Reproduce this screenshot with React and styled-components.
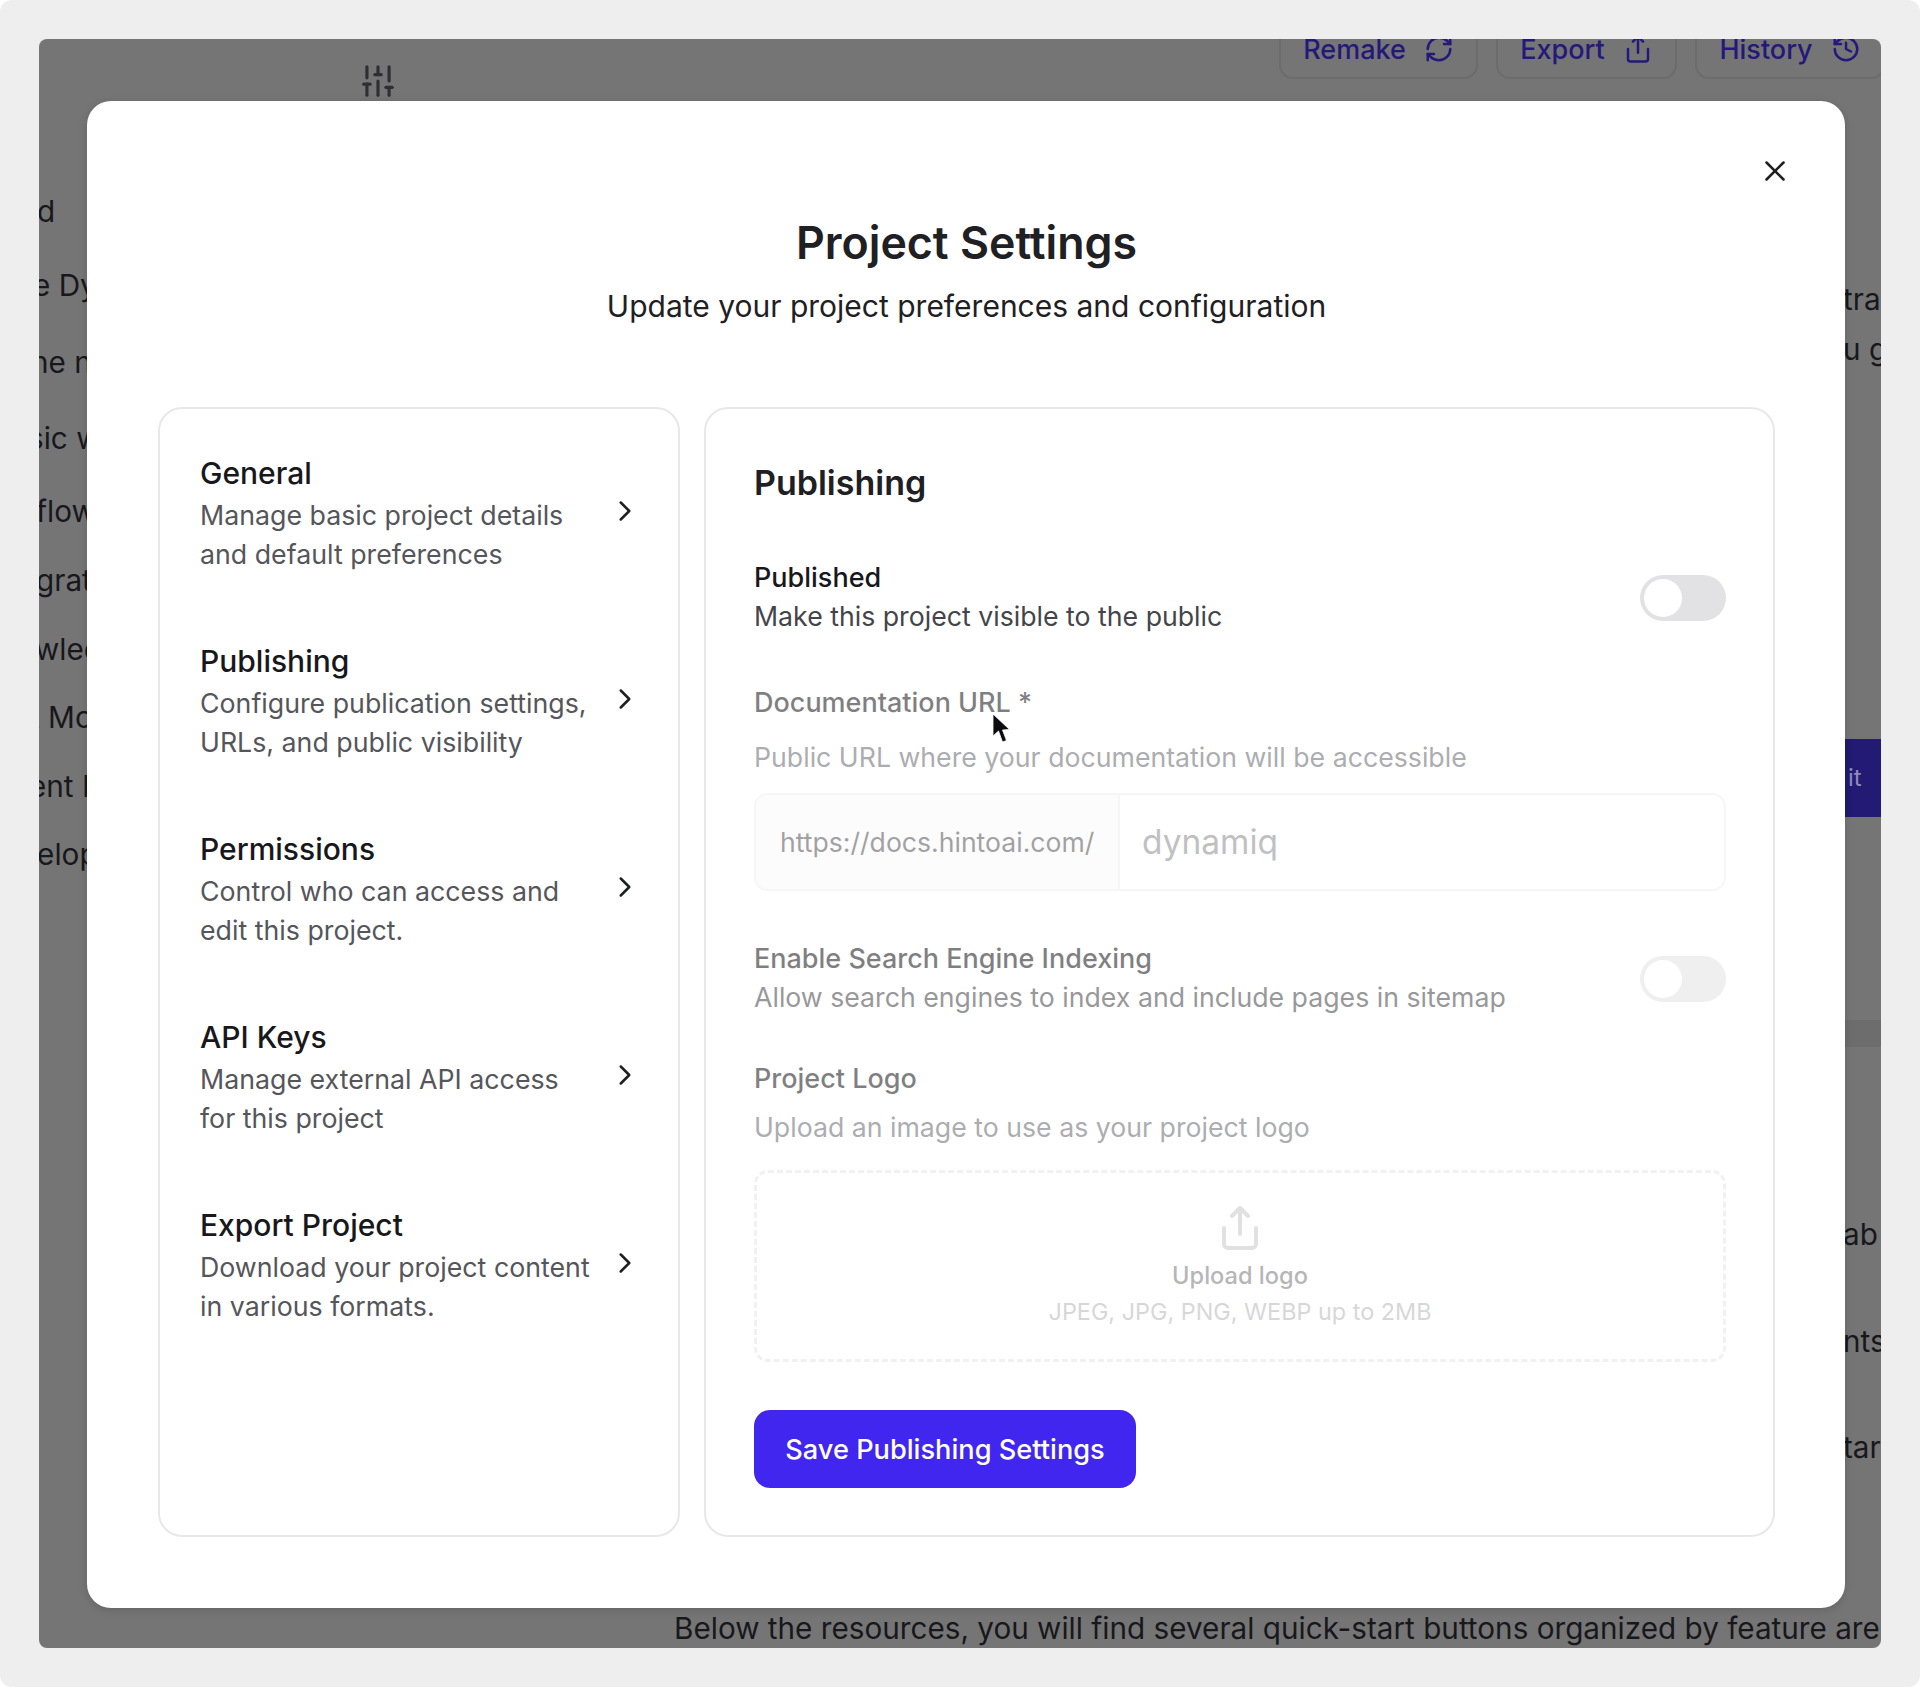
import styled, { createGlobalStyle } from "styled-components";
import { ChevronRight, History, RefreshCw, Share, SlidersVertical, X } from "lucide-react";

const navItems = [
  { title: "General", lines: ["Manage basic project details", "and default preferences"] },
  { title: "Publishing", lines: ["Configure publication settings,", "URLs, and public visibility"] },
  { title: "Permissions", lines: ["Control who can access and", "edit this project."] },
  { title: "API Keys", lines: ["Manage external API access", "for this project"] },
  { title: "Export Project", lines: ["Download your project content", "in various formats."] },
];

// the page behind the dialog, only the ends of its lines show
const backLeft = [
  { text: "d", shift: -2, pitch: 74 },
  { text: "e Dy", shift: -6, pitch: 77 },
  { text: "he n", shift: -8, pitch: 76 },
  { text: "sic w", shift: -11, pitch: 73 },
  { text: "flow", shift: -3, pitch: 69 },
  { text: "grat", shift: -3, pitch: 69 },
  { text: "wled", shift: -4, pitch: 68 },
  { text: "t Mo", shift: -9, pitch: 69 },
  { text: "ent P", shift: -10, pitch: 68 },
  { text: "velop", shift: -18, pitch: 68 },
];

export default function App() {
  return (
    <Page>
      <GlobalStyle />
      <Screen>
        <TopBar>
          <FilterSlot>
            <SlidersVertical size={38} strokeWidth={2} />
          </FilterSlot>
          <TopButton $width={199}>
            Remake <RefreshCw size={30} strokeWidth={2} />
          </TopButton>
          <TopButton $width={181}>
            Export <Share size={30} strokeWidth={2} />
          </TopButton>
          <TopButton $width={190}>
            History <History size={30} strokeWidth={2} />
          </TopButton>
        </TopBar>

        <BackLeft>
          {backLeft.map((line) => (
            <BackLeftLine key={line.text} $shift={line.shift} $pitch={line.pitch}>
              {line.text}
            </BackLeftLine>
          ))}
        </BackLeft>

        <BackRight>
          <BackBlock $height={86}>
            <BackLine>tra</BackLine>
            <BackLine>u g</BackLine>
          </BackBlock>
          <BackAction>it</BackAction>
          <BackBand />
          <BackBlock $height={249}>
            <BackLine>ab</BackLine>
            <BackLine>nts</BackLine>
            <BackLine>tar</BackLine>
          </BackBlock>
        </BackRight>

        <BackBottom>Below the resources, you will find several quick-start buttons organized by feature are</BackBottom>

        <Modal>
          <CloseButton>
            <X size={34} strokeWidth={1.8} />
          </CloseButton>
          <Title>Project Settings</Title>
          <Subtitle>Update your project preferences and configuration</Subtitle>

          <Columns>
            <NavCard>
              {navItems.map((item) => (
                <NavItem key={item.title}>
                  <div>
                    <NavTitle>{item.title}</NavTitle>
                    {item.lines.map((line) => (
                      <NavText key={line}>{line}</NavText>
                    ))}
                  </div>
                  <NavChevron size={34} strokeWidth={1.8} />
                </NavItem>
              ))}
            </NavCard>

            <MainCard>
              <SectionTitle>Publishing</SectionTitle>

              <ToggleRow>
                <div>
                  <Label>Published</Label>
                  <Help>Make this project visible to the public</Help>
                </div>
                <Toggle />
              </ToggleRow>

              <Faded>
                <Label>Documentation URL *</Label>
                <FieldHelp>Public URL where your documentation will be accessible</FieldHelp>
                <UrlField>
                  <UrlPrefix>https://docs.hintoai.com/</UrlPrefix>
                  <UrlValue>dynamiq</UrlValue>
                </UrlField>

                <IndexRow>
                  <div>
                    <Label>Enable Search Engine Indexing</Label>
                    <Help>Allow search engines to index and include pages in sitemap</Help>
                  </div>
                  <Toggle />
                </IndexRow>

                <LogoLabel>Project Logo</LogoLabel>
                <LogoHelp>Upload an image to use as your project logo</LogoHelp>
                <DropZone>
                  <Share size={48} strokeWidth={2} color="#c9c9cb" />
                  <DropTitle>Upload logo</DropTitle>
                  <DropHint>JPEG, JPG, PNG, WEBP up to 2MB</DropHint>
                </DropZone>
              </Faded>

              <SaveButton>Save Publishing Settings</SaveButton>
            </MainCard>
          </Columns>

          <Cursor viewBox="0 0 18 30" width="18" height="30">
            <path d="M1 1 L1 23 L6.5 18 L10.5 29 L14.5 27.5 L10.5 17 L17.5 16.5 Z" fill="#0c0c0e" stroke="#ffffff" strokeWidth="0.8" />
          </Cursor>
        </Modal>
      </Screen>
    </Page>
  );
}

const GlobalStyle = createGlobalStyle`
  html, body {
    margin: 0;
    padding: 0;
    background: #ffffff;
  }
  * {
    box-sizing: border-box;
  }
`;

const Page = styled.div`
  width: 1920px;
  height: 1687px;
  padding: 39px;
  background: #eeeeee;
  border-radius: 12px;
  font-family: Inter, "Liberation Sans", sans-serif;
  color: #1f2023;
`;

const Screen = styled.div`
  position: relative;
  width: 1842px;
  height: 1609px;
  overflow: hidden;
  border-radius: 8px;
  background: #757575;
  color: #18181c;
`;

const TopBar = styled.div`
  display: flex;
  align-items: flex-start;
  gap: 18px;
  height: 40px;
`;

const FilterSlot = styled.div`
  display: flex;
  margin: 23px 864px 0 320px;
  color: #2f2f33;
`;

const TopButton = styled.div`
  flex: none;
  display: flex;
  align-items: center;
  justify-content: center;
  gap: 18px;
  width: ${(p) => p.$width}px;
  height: 80px;
  margin-top: -40px;
  padding-top: 20px;
  border: 2px solid #6c6c6c;
  border-radius: 14px;
  font-size: 27px;
  font-weight: 500;
  color: #24197a;
`;

const BackLeft = styled.div`
  display: flex;
  flex-direction: column;
  margin-top: 114px;
`;

const BackLine = styled.div`
  white-space: pre;
  font-size: 29.7px;
  line-height: 36px;
`;

const BackLeftLine = styled(BackLine)`
  height: ${(p) => p.$pitch}px;
  margin-left: ${(p) => p.$shift}px;
`;

const BackRight = styled.div`
  position: absolute;
  top: 242px;
  right: 0;
  display: flex;
  flex-direction: column;
  width: 36px;
  overflow: hidden;
`;

const BackBlock = styled.div`
  display: flex;
  flex-direction: column;
  justify-content: space-between;
  height: ${(p) => p.$height}px;
  margin: 0 0 372px -2px;
  white-space: nowrap;

  &:last-child {
    margin-bottom: 0;
  }
`;

const BackAction = styled.div`
  height: 78px;
  padding-left: 3px;
  background: #221a73;
  color: #8f8bb8;
  font-size: 24px;
  line-height: 78px;
`;

const BackBand = styled.div`
  height: 27px;
  margin: 203px 0 169px;
  background: #6d6d6d;
`;

const BackBottom = styled.div`
  position: absolute;
  left: 635px;
  bottom: 0;
  height: 38px;
  width: 1207px;
  overflow: hidden;
  white-space: nowrap;
  font-size: 29.7px;
  line-height: 36px;
`;

const Modal = styled.div`
  position: absolute;
  left: 48px;
  top: 62px;
  width: 1758px;
  height: 1507px;
  padding: 116px 70px 0 71px;
  border-radius: 24px;
  background: #ffffff;
  box-shadow: 0 2px 8px rgba(0, 0, 0, 0.15);
  text-align: center;
`;

const CloseButton = styled.div`
  position: absolute;
  top: 53px;
  right: 53px;
  display: flex;
  color: #1f2023;
`;

const Title = styled.h1`
  margin: 0;
  font-size: 44.7px;
  line-height: 52px;
  font-weight: 600;
  color: #1f2023;
`;

const Subtitle = styled.p`
  margin: 18px 0 0;
  font-size: 30px;
  line-height: 38px;
  color: #1f2023;
`;

const Columns = styled.div`
  display: grid;
  grid-template-columns: 522px 1071px;
  gap: 24px;
  height: 1130px;
  margin-top: 82px;
  text-align: left;
`;

const Card = styled.div`
  border: 2px solid #e8e8ea;
  border-radius: 24px;
`;

const NavCard = styled(Card)`
  display: flex;
  flex-direction: column;
  gap: 34px;
  padding: 28px 36px 0 40px;
`;

const NavItem = styled.div`
  display: flex;
  align-items: center;
  justify-content: space-between;
  height: 154px;
`;

const NavTitle = styled.div`
  font-size: 30px;
  line-height: 38px;
  font-weight: 500;
  margin-bottom: 4px;
`;

const NavText = styled.div`
  font-size: 26.75px;
  line-height: 39px;
  color: #55565b;
`;

const NavChevron = styled(ChevronRight)`
  flex: none;
  margin-top: -6px;
  color: #1f2023;
`;

const MainCard = styled(Card)`
  display: flex;
  flex-direction: column;
  align-items: stretch;
  padding: 52px 47px 0 48px;
`;

const SectionTitle = styled.h2`
  margin: 0;
  font-size: 34px;
  line-height: 44px;
  font-weight: 600;
  color: #1f2023;
`;

const ToggleRow = styled.div`
  display: flex;
  align-items: center;
  justify-content: space-between;
  margin-top: 54px;
`;

const IndexRow = styled(ToggleRow)`
  margin-top: 49px;
`;

const Label = styled.div`
  font-size: 27px;
  line-height: 38px;
  font-weight: 500;
`;

const Help = styled.div`
  font-size: 26.7px;
  line-height: 39px;
  color: #44454a;
`;

const Toggle = styled.div`
  position: relative;
  flex: none;
  width: 86px;
  height: 46px;
  border-radius: 23px;
  background: #e2e2e4;

  &::after {
    content: "";
    position: absolute;
    left: 4px;
    top: 4px;
    width: 38px;
    height: 38px;
    border-radius: 50%;
    background: #ffffff;
  }
`;

const Faded = styled.div`
  margin-top: 48px;
  opacity: 0.55;
`;

const LogoLabel = styled(Label)`
  margin-top: 43px;
`;

const FieldHelp = styled.div`
  margin-top: 16px;
  font-size: 26.7px;
  line-height: 39px;
  color: #6a6b70;
`;

const LogoHelp = styled(FieldHelp)`
  margin-top: 10px;
`;

const UrlField = styled.div`
  display: flex;
  height: 98px;
  margin-top: 16px;
  border: 2px solid #f0f0f2;
  border-radius: 14px;
  overflow: hidden;
`;

const UrlPrefix = styled.div`
  display: flex;
  align-items: center;
  width: 364px;
  padding-left: 24px;
  border-right: 2px solid #f0f0f2;
  background: #fafafa;
  font-size: 26.6px;
  color: #55565b;
`;

const UrlValue = styled.div`
  display: flex;
  align-items: center;
  padding-left: 22px;
  font-size: 33.5px;
  color: #8e8e93;
`;

const DropZone = styled.div`
  display: flex;
  flex-direction: column;
  align-items: center;
  height: 192px;
  margin-top: 23px;
  padding-top: 31px;
  border: 3px dashed #e6e6e8;
  border-radius: 14px;
`;

const DropTitle = styled.div`
  margin-top: 7px;
  font-size: 23.6px;
  line-height: 34px;
  font-weight: 500;
  color: #7b7c80;
`;

const DropHint = styled.div`
  margin-top: 2px;
  font-size: 23.4px;
  line-height: 34px;
  color: #b7b7ba;
`;

const SaveButton = styled.div`
  display: flex;
  align-items: center;
  justify-content: center;
  width: 382px;
  height: 78px;
  margin-top: 48px;
  border-radius: 16px;
  background: #4126f0;
  color: #ffffff;
  font-size: 27.2px;
  font-weight: 500;
`;

const Cursor = styled.svg`
  position: absolute;
  left: 905px;
  top: 612px;
`;
